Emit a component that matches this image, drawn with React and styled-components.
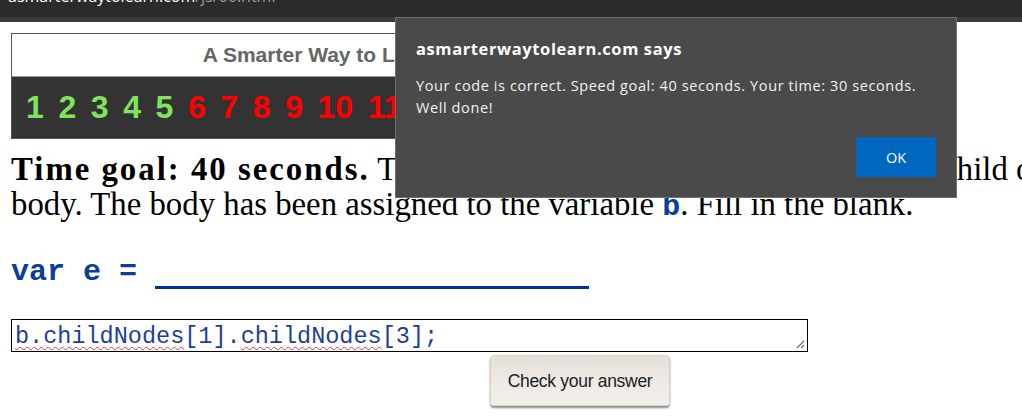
import React from "react";
import styled, { createGlobalStyle } from "styled-components";

const GlobalStyle = createGlobalStyle`
  html, body {
    margin: 0;
    padding: 0;
    background: #ffffff;
    overflow: hidden;
  }
`;

const Page = styled.div`
  position: relative;
  width: 1022px;
  height: 419px;
  overflow: hidden;
`;

const AddressBar = styled.div`
  height: 17px;
  background: #2b2b2b;
  border-bottom: 5px solid #3b3b3b;
  overflow: hidden;
  padding-left: 8px;
`;

const Url = styled.div`
  margin-top: -14px;
  font-family: "Open Sans", sans-serif;
  font-size: 16px;
  line-height: 20px;
  color: #ffffff;
  white-space: nowrap;
`;

const UrlPath = styled.span`
  color: #9a9a9a;
`;

const Content = styled.div`
  width: 1138px;
  padding: 11px 0 0 11px;
`;

const Banner = styled.div`
  width: 730px;
  border: 1px solid #555555;
  background: #333333;
`;

const BannerTitle = styled.div`
  height: 42px;
  background: #ffffff;
  border-bottom: 1px solid #9a9a9a;
  font-family: "Liberation Sans", Arial, sans-serif;
  font-weight: bold;
  font-size: 21px;
  line-height: 42px;
  color: #666666;
  text-align: center;
`;

const ChapterStrip = styled.div`
  display: flex;
  gap: 14.6px;
  height: 61px;
  padding-left: 14px;
  align-items: center;
  overflow: hidden;
`;

const ChapterNum = styled.span`
  font-family: "Liberation Sans", Arial, sans-serif;
  font-weight: bold;
  font-size: 32px;
  line-height: 61px;
  color: ${(p) => (p.$done ? "#80e35e" : "#ff0000")};
`;

const Prompt = styled.p`
  width: 1050px;
  margin: 13px 0 0;
  font-family: "Liberation Serif", "Times New Roman", serif;
  font-size: 32.8px;
  line-height: 35px;
  color: #000000;

  strong {
    letter-spacing: 2px;
  }
`;

const InlineCode = styled.span`
  font-family: "Liberation Mono", "Courier New", monospace;
  font-weight: bold;
  font-size: 30px;
  color: #0b3d99;
`;

const Statement = styled.div`
  height: 34px;
  margin-top: 30px;
  font-family: "Liberation Mono", "Courier New", monospace;
  font-weight: bold;
  font-size: 30px;
  line-height: 34px;
  color: #0b3d99;
  white-space: pre;
`;

const Blank = styled.span`
  display: inline-block;
  width: 434px;
  height: 0;
  border-bottom: 3px solid #003399;
  vertical-align: -9px;
`;

const AnswerBox = styled.div`
  position: relative;
  box-sizing: border-box;
  width: 797px;
  height: 33px;
  margin-top: 30px;
  padding: 3px 3px 1px 3px;
  border: 1px solid #000000;
  font-family: "Liberation Mono", "Courier New", monospace;
  font-size: 23.5px;
  line-height: 27px;
  color: #1c3f95;
  white-space: pre;
`;

const Misspelled = styled.span`
  text-decoration-line: underline;
  text-decoration-style: wavy;
  text-decoration-color: #e83a3a;
  text-decoration-thickness: 1px;
  text-underline-offset: 3px;
`;

const Grip = styled.svg`
  position: absolute;
  right: 2px;
  bottom: 2px;
`;

const ButtonRow = styled.div`
  display: flex;
  justify-content: center;
  padding-top: 3px;
`;

const CheckButton = styled.button`
  width: 180px;
  height: 51px;
  border: 1px solid #d9d2ca;
  border-radius: 4px;
  background: linear-gradient(#e6dfd8, #efebe6 60%, #f1eeea);
  box-shadow: 0 2px 2px rgba(0, 0, 0, 0.45);
  font-family: "Liberation Sans", Arial, sans-serif;
  font-size: 17.5px;
  letter-spacing: -0.3px;
  color: #222222;
  padding: 2px 0 0;
`;

const Dialog = styled.div`
  position: absolute;
  left: 395px;
  top: 17px;
  box-sizing: border-box;
  width: 562px;
  height: 181px;
  padding: 20px 20px 20px 20px;
  background: #4a4a4a;
  border: 1px solid #6e6e6e;
  display: flex;
  flex-direction: column;
  font-family: "Open Sans", "Noto Sans", sans-serif;
  color: #ffffff;
`;

const DialogTitle = styled.div`
  font-weight: bold;
  font-size: 16.5px;
  letter-spacing: 0.6px;
  line-height: 22px;
`;

const DialogBody = styled.div`
  margin-top: 15px;
  font-size: 14.5px;
  letter-spacing: 0.6px;
  line-height: 22px;
  color: #f2f2f2;
`;

const DialogActions = styled.div`
  margin-top: auto;
  display: flex;
  justify-content: flex-end;
`;

const OkButton = styled.button`
  width: 80px;
  height: 40px;
  border: none;
  border-radius: 3px;
  background: #0067c0;
  color: #ffffff;
  font-family: "Open Sans", "Noto Sans", sans-serif;
  font-size: 14.5px;
  padding: 0;
`;

const chapters = Array.from({ length: 20 }, (_, i) => i + 1);

export default function App() {
  return (
    <Page>
      <GlobalStyle />
      <AddressBar>
        <Url>
          asmarterwaytolearn.com<UrlPath>/js/66.html</UrlPath>
        </Url>
      </AddressBar>

      <Content>
        <Banner>
          <BannerTitle>A Smarter Way to Learn JavaScript</BannerTitle>
          <ChapterStrip>
            {chapters.map((n) => (
              <ChapterNum key={n} $done={n <= 5}>
                {n}
              </ChapterNum>
            ))}
          </ChapterStrip>
        </Banner>

        <Prompt>
          <strong>Time goal: 40 seconds.</strong> The target is the fourth child of the second
          child of body. The body has been assigned to the variable <InlineCode>b</InlineCode>.
          Fill in the blank.
        </Prompt>

        <Statement>
          {"var e = "}
          <Blank />
        </Statement>

        <AnswerBox>
          <Misspelled>b.childNodes</Misspelled>[1].<Misspelled>childNodes</Misspelled>[3];
          <Grip width="9" height="9" viewBox="0 0 9 9">
            <path d="M1 8 L8 1 M5 8 L8 5" stroke="#6b6b6b" strokeWidth="1.2" />
          </Grip>
        </AnswerBox>

        <ButtonRow>
          <CheckButton>Check your answer</CheckButton>
        </ButtonRow>
      </Content>

      <Dialog>
        <DialogTitle>asmarterwaytolearn.com says</DialogTitle>
        <DialogBody>
          Your code is correct. Speed goal: 40 seconds. Your time: 30 seconds.
          <br />
          Well done!
        </DialogBody>
        <DialogActions>
          <OkButton>OK</OkButton>
        </DialogActions>
      </Dialog>
    </Page>
  );
}
